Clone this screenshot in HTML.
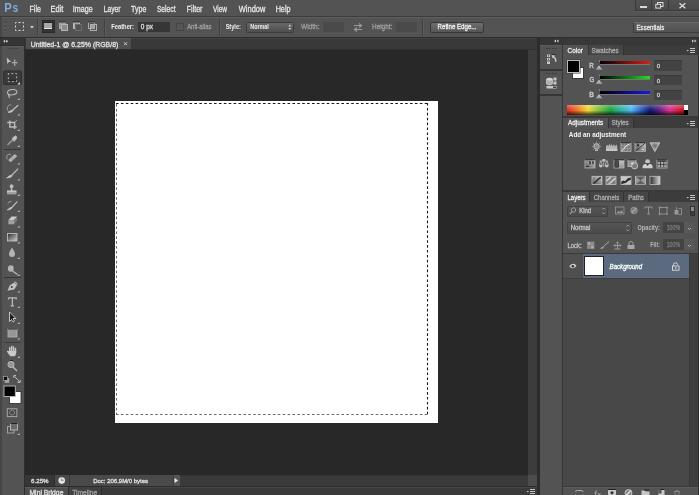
<!DOCTYPE html>
<html><head><meta charset="utf-8">
<style>
*{margin:0;padding:0;box-sizing:border-box}
html,body{width:699px;height:495px;overflow:hidden;background:#535353;font-family:"Liberation Sans",sans-serif;position:relative}
.a{position:absolute}
svg{position:absolute;overflow:visible}
</style></head><body>


<!-- MENU BAR -->
<div class="a" style="left:0;top:0;width:699px;height:16px;background:#535353"></div>
<!-- window controls -->
<div class="a" style="left:634.7px;top:0;width:64.3px;height:10.5px;background:linear-gradient(#525252,#4a4a4a);border-left:1px solid #3c3c3c;border-bottom:1px solid #3a3a3a;box-shadow:0 1px 0 #5c5c5c"></div>
<div class="a" style="left:651.3px;top:0;width:1px;height:10px;background:#3a3a3a"></div>
<div class="a" style="left:668.2px;top:0;width:1px;height:10px;background:#3a3a3a"></div>
<div class="a" style="left:640px;top:6px;width:7px;height:1.5px;background:#d8d8d8"></div>
<svg style="left:0;top:0" width="699" height="16">
<rect x="657.5" y="2.5" width="5.5" height="4" fill="none" stroke="#dcdcdc" stroke-width="1"/>
<rect x="655.8" y="4.3" width="4.8" height="3.8" fill="#4e4e4e" stroke="#dcdcdc" stroke-width="1"/>
<path d="M679.5 3.2L685.3 8.3M685.3 3.2L679.5 8.3" stroke="#dcdcdc" stroke-width="1.3"/>
</svg>
<div class="a" style="left:0;top:16px;width:699px;height:1px;background:#3c3c3c"></div>

<!-- OPTIONS BAR -->
<div class="a" style="left:0;top:17px;width:699px;height:20px;background:#535353;border-top:1px solid #5e5e5e"></div>
<div class="a" style="left:0;top:17px;width:2px;height:20px;background:#464646"></div>
<div class="a" style="left:0;top:37px;width:699px;height:1px;background:#2e2e2e"></div>


<!-- options content -->
<svg style="left:4px;top:20px" width="2" height="15"><g fill="#3c3c3c"><rect x="0.5" y="2" width="1.5" height="1"/><rect x="0.5" y="6" width="1.5" height="1"/><rect x="0.5" y="10" width="1.5" height="1"/></g><g fill="#686868"><rect x="0.5" y="3" width="1.5" height="1"/><rect x="0.5" y="7" width="1.5" height="1"/><rect x="0.5" y="11" width="1.5" height="1"/></g></svg>
<svg style="left:15px;top:22px" width="10" height="10"><rect x="0.5" y="0.5" width="8" height="8" fill="none" stroke="#dcdcdc" stroke-dasharray="2 2" stroke-dashoffset="1"/></svg>
<svg style="left:30px;top:26px" width="5" height="3"><path d="M0 0H4L2 2.5Z" fill="#d0d0d0"/></svg>
<div class="a" style="left:37px;top:19px;width:1px;height:17px;background:#404040"></div>
<div class="a" style="left:38px;top:19px;width:1px;height:17px;background:#5c5c5c"></div>
<div class="a" style="left:42px;top:20px;width:13px;height:13px;background:#333333;border:1px solid #2a2a2a"></div>
<svg style="left:44px;top:22px" width="9" height="8"><rect x="0" y="0" width="8" height="7" fill="#a8a8a8"/><rect x="0" y="0" width="8" height="1" fill="#222"/><rect x="0" y="6" width="8" height="1" fill="#e0e0e0"/></svg>
<svg style="left:58.5px;top:21px" width="10" height="10"><rect x="0.5" y="1.5" width="6" height="6" fill="#9a9a9a" stroke="#a8a8a8"/><rect x="0" y="0.5" width="7" height="1" fill="#2a2a2a"/><rect x="2.5" y="3.5" width="6" height="6" fill="#8a8a8a" stroke="#b4b4b4"/></svg>
<svg style="left:72.5px;top:21px" width="10" height="10"><rect x="0.5" y="1.5" width="6" height="6" fill="#a8a8a8" stroke="#b8b8b8"/><rect x="0" y="0.5" width="7" height="1" fill="#2a2a2a"/><rect x="2.5" y="3.5" width="6" height="6" fill="#535353" stroke="#6e6e6e"/></svg>
<svg style="left:87.5px;top:21px" width="10" height="10"><rect x="0.5" y="1.5" width="6" height="6" fill="none" stroke="#a8a8a8"/><rect x="0" y="0.5" width="7" height="1" fill="#2a2a2a"/><rect x="2.5" y="3.5" width="6" height="6" fill="none" stroke="#b0b0b0"/><rect x="3" y="4" width="3" height="3" fill="#a0a0a0"/></svg>
<div class="a" style="left:104px;top:19px;width:1px;height:17px;background:#404040"></div>
<div class="a" style="left:105px;top:19px;width:1px;height:17px;background:#5c5c5c"></div>
<div class="a" style="left:138px;top:22px;width:32px;height:10px;background:#363636"></div>
<div class="a" style="left:176px;top:23px;width:8px;height:8px;background:#555;border:1px solid #454545"></div>
<div class="a" style="left:219px;top:19px;width:1px;height:17px;background:#404040"></div>
<div class="a" style="left:220px;top:19px;width:1px;height:17px;background:#5c5c5c"></div>
<div class="a" style="left:245.5px;top:21.5px;width:48px;height:11px;background:linear-gradient(#686868,#4e4e4e);border:1px solid #3c3c3c;border-radius:1.5px"></div>
<svg style="left:287.5px;top:24px" width="4" height="7"><path d="M0.3 2.6H3.3L1.8 0.6Z M0.3 4H3.3L1.8 6Z" fill="#d0d0d0"/></svg>
<div class="a" style="left:323px;top:22px;width:21px;height:10px;background:#4a4a4a"></div>
<svg style="left:353px;top:23px" width="10" height="9"><path d="M1 2.5H8M6 0.5L8.5 2.5L6 4.5M9 6.5H2M4 4.5L1.5 6.5L4 8.5" fill="none" stroke="#9a9a9a" stroke-width="1.2"/></svg>
<div class="a" style="left:396px;top:22px;width:21px;height:10px;background:#4a4a4a"></div>
<div class="a" style="left:422px;top:19px;width:1px;height:17px;background:#404040"></div>
<div class="a" style="left:423px;top:19px;width:1px;height:17px;background:#5c5c5c"></div>
<div class="a" style="left:430px;top:22px;width:54px;height:10.5px;background:linear-gradient(#6e6e6e,#565656);border:1px solid #383838;border-radius:2px"></div>
<div class="a" style="left:633px;top:22px;width:66px;height:11px;background:linear-gradient(#5e5e5e,#525252);border:1px solid #3c3c3c;border-top:1px solid #686868;border-right:none"></div>

<!-- LEFT TOOLBAR -->
<div class="a" style="left:0;top:38px;width:25.5px;height:457px;background:#464646"></div>
<div class="a" style="left:0;top:38px;width:24px;height:6.5px;background:#353535"></div>
<div class="a" style="left:0;top:44.5px;width:24px;height:1px;background:#303030"></div>
<div class="a" style="left:1.7px;top:45.5px;width:22.3px;height:450px;background:#535353;border-top:1px solid #5a5a5a"></div>
<div class="a" style="left:24px;top:38px;width:1.5px;height:457px;background:#2e2e2e"></div>

<!-- TOOLBAR ICONS -->
<svg style="left:0;top:0" width="25" height="495">
<defs>
<linearGradient id="gg" x1="0" x2="1" y1="0" y2="1"><stop offset="0" stop-color="#2a2a2a"/><stop offset="1" stop-color="#d0d0d0"/></linearGradient>
<linearGradient id="sv" x1="0" x2="0" y1="0" y2="1"><stop offset="0" stop-color="#d8d8d8"/><stop offset="1" stop-color="#909090"/></linearGradient>
</defs>
<!-- header arrows -->
<path d="M3.8 39.8L5.8 41.3L3.8 42.8Z M6.3 39.8L8.3 41.3L6.3 42.8Z" fill="#e0e0e0"/>
<!-- grip -->
<g fill="#404040"><rect x="7.5" y="48" width="2" height="1"/><rect x="10" y="48" width="2" height="1"/><rect x="13.5" y="48" width="2" height="1"/><rect x="16" y="48" width="2" height="1"/></g>
<!-- move -->
<path d="M6.6 57.6L11.3 61.7L8.9 61.9L7.4 64Z" fill="#bebebe"/>
<path d="M14.7 59.7V65.7M12.2 62.7H17.2" stroke="#b4b4b4" stroke-width="1"/>
<path d="M13.7 60.7L14.7 59.4L15.7 60.7Z M13.7 64.7L14.7 66L15.7 64.7Z M13.2 61.7L11.9 62.7L13.2 63.7Z M16.2 61.7L17.5 62.7L16.2 63.7Z" fill="#b4b4b4"/>
<!-- marquee selected bg -->
<rect x="3.5" y="71" width="18" height="13.5" rx="1" fill="#3a3a3a" stroke="#2e2e2e"/>
<rect x="8.3" y="73.6" width="8.3" height="8" fill="none" stroke="#b0b0b0" stroke-width="1" stroke-dasharray="2 2" stroke-dashoffset="1"/>
<path d="M9.5 80.3H15.5" stroke="#1a1a1a" stroke-width="0.9"/>
<path d="M20 82V84.5H17.2Z" fill="#e0e0e0"/>
<g fill="none" stroke="#bcbcbc" stroke-width="1" stroke-linecap="round">
<!-- lasso -->
<ellipse cx="12.2" cy="92.2" rx="4.7" ry="2.7" transform="rotate(-8 12.2 92.2)"/>
<path d="M8.7 94.6Q8.2 96.2 9.6 97.6" stroke-width="1.1"/>
<!-- quick select -->
<path d="M9.5 112.5Q6.5 110 7.5 107Q8.5 104.5 11 105" stroke-dasharray="1 0.9" stroke-width="0.9" stroke="#a8a8a8"/>
<path d="M17.8 105.5L12.5 110.2" stroke-width="1.4"/>
<path d="M8.8 112.3Q10.3 109.8 13 110.4Q12.6 112.6 8.8 112.3Z" fill="#c8c8c8"/>
<!-- crop -->
<path d="M9.8 120.5V127H16.7M7.2 122.5H14.6V129" stroke-width="1.4" stroke-linecap="butt"/>
<path d="M16.8 120.3L15 122" stroke-width="0.7"/>
<!-- eyedropper -->
<path d="M8 144.5L13.3 139.3" stroke-width="1.5" stroke="#9c9c9c"/>
<path d="M12.3 138.3L15.3 135.8Q17.2 136.3 16.7 138.3L14.3 141.3Z" fill="#c4c4c4" stroke-width="0.8"/>
</g>
<rect x="4" y="149" width="17" height="1" fill="#363636"/>
<g fill="none" stroke="#bcbcbc" stroke-width="1" stroke-linecap="round">
<!-- healing -->
<path d="M7 159Q5.8 155 9 154.2Q10.5 154 10.8 155" stroke-width="0.9" stroke="#a8a8a8"/>
<path d="M8.2 160L14.8 154L17.2 156.2L10.6 162.2Z" fill="#b4b4b4" stroke="none"/>
<path d="M10.8 158.2L13 160.2M12.6 156.6L14.8 158.6" stroke="#8a8a8a" stroke-width="0.6"/>
<!-- brush -->
<path d="M17.8 169L12 175" stroke-width="1.1"/>
<path d="M7 177.8Q8.8 175 12.2 175.2Q12.2 177.6 7 177.8Z" fill="#c4c4c4"/>
<!-- stamp -->
<circle cx="11.6" cy="186.2" r="1.9" fill="#b8b8b8" stroke="none"/>
<path d="M11.6 187V190.5" stroke-width="1.6"/>
<path d="M7 190.5H16.5V194.5H7Z" fill="url(#sv)" stroke="none"/>
<path d="M7 192.8H16.5" stroke="#8a8a8a" stroke-width="0.6"/>
<!-- history brush -->
<path d="M8 203.2Q9 201.2 11 201.4" stroke-width="0.9" stroke="#a8a8a8"/>
<path d="M17 201.8L11.8 207.5" stroke-width="1.2"/>
<path d="M7.8 209.8Q9.3 207.2 12 207.6Q11.6 209.8 7.8 209.8Z" fill="#c4c4c4"/>
<!-- eraser -->
<path d="M8.3 220.2L11.5 216.6H17.2L14 220.2Z" fill="#cacaca" stroke="none"/>
<path d="M8.3 220.2H14V224.3H8.3Z" fill="#a0a0a0" stroke="none"/>
<path d="M14 220.2L17.2 216.6V220.8L14 224.3Z" fill="#7a7a7a" stroke="none"/>
</g>
<!-- gradient -->
<rect x="7.5" y="233.5" width="9.5" height="7.5" fill="url(#gg)" stroke="#bcbcbc" stroke-width="0.9"/>
<!-- blur drop -->
<path d="M12 247.5Q9 252 9 254Q9 257 12 257Q15 257 15 254Q15 252 12 247.5Z" fill="#b4b4b4"/>
<!-- dodge -->
<ellipse cx="10.8" cy="268.5" rx="2.9" ry="3.3" fill="#b4b4b4"/>
<path d="M12.5 271L17.5 274.5" stroke="#bcbcbc" stroke-width="1.3"/>
<rect x="4" y="277" width="17" height="1" fill="#363636"/>
<!-- pen -->
<path d="M7.5 290.8L9.8 285.2L14.3 282.6L17 285.2L14.2 289.6Z" fill="#c0c0c0"/>
<circle cx="11.8" cy="287" r="0.9" fill="#333"/>
<path d="M14.6 281.6L17.6 284.4" stroke="#bcbcbc" stroke-width="1.1"/>
<!-- type T -->
<path d="M8.5 297.8H16.2V299.6M8.5 297.8V299.6M12.35 297.8V305.8M10.6 305.8H14.1" fill="none" stroke="#bcbcbc" stroke-width="1.2"/>
<!-- path select -->
<path d="M9.5 312V321.5L11.5 319.5L13 322L14.5 321L13 318.5H16Z" fill="#1e1e1e" stroke="#cfcfcf" stroke-width="0.9" stroke-linejoin="round"/>
<!-- shape rect -->
<rect x="8" y="329" width="9" height="8" fill="#969696" stroke="#b4b4b4" stroke-width="0.8"/>
<rect x="8" y="328.5" width="9" height="1" fill="#222"/>
<rect x="4" y="342" width="17" height="0.8" fill="#3a3a3a"/>
<!-- hand -->
<g fill="#c8c8c8"><rect x="9" y="347" width="1.5" height="6" rx="0.7"/><rect x="10.9" y="345.8" width="1.5" height="6" rx="0.7"/><rect x="12.8" y="346.3" width="1.5" height="6" rx="0.7"/><rect x="14.7" y="347.8" width="1.5" height="5" rx="0.7"/>
<path d="M9 351H16.2V353.5Q15.6 356.2 14 356.2H10.5Q9.5 355.5 8.5 354L6.8 351.5Q7.2 350.3 8.3 351Z"/></g>
<!-- zoom -->
<circle cx="11" cy="364.5" r="3.1" fill="#969696" stroke="#bcbcbc" stroke-width="0.9"/>
<path d="M13 367L17 371" stroke="#bcbcbc" stroke-width="1.5"/>
<rect x="10" y="360" width="3" height="1" fill="#222"/>
<!-- default colors -->
<rect x="4.8" y="378.2" width="4.4" height="4.6" fill="#a8a8a8"/>
<rect x="3.5" y="376.5" width="3.8" height="3.8" fill="#111" stroke="#b0b0b0" stroke-width="0.6"/>
<!-- swap -->
<path d="M14.6 376.6L17.2 379.2Q18.8 380.2 19.2 382" fill="none" stroke="#c4c4c4" stroke-width="1"/>
<path d="M13.8 375.6H16M13.8 375.6V377.8M17.6 382.4H20.2M20.2 380V382.4" fill="none" stroke="#c4c4c4" stroke-width="1"/>
<!-- bg color -->
<rect x="9.5" y="391.5" width="11.5" height="12" fill="#ffffff" stroke="#2a2a2a" stroke-width="0.8"/>
<!-- fg color -->
<rect x="4" y="386" width="11.3" height="10.5" fill="#000" stroke="#bcbcbc" stroke-width="0.9"/>
<!-- quick mask -->
<rect x="7.3" y="408.8" width="9.6" height="7.8" fill="#4a4a4a" stroke="#a8a8a8" stroke-width="1"/>
<circle cx="12.1" cy="412.6" r="2.4" fill="none" stroke="#b0b0b0" stroke-width="0.9" stroke-dasharray="1.2 0.6"/>
<!-- screen mode -->
<rect x="7.5" y="426.5" width="6.5" height="6.5" fill="none" stroke="#a0a0a0" stroke-width="1"/>
<rect x="10.5" y="423.5" width="7" height="6.5" fill="#6a6a6a" stroke="#b0b0b0" stroke-width="1"/>
<rect x="10.5" y="423" width="7" height="1" fill="#222"/>
<!-- small triangles -->
<g fill="#d4d4d4">
<path d="M19.5 98V100H17.5Z"/>
<path d="M19.5 113.5V115.5H17.5Z"/>
<path d="M19.5 129V131H17.5Z"/>
<path d="M19.5 145V147H17.5Z"/>
<path d="M19.5 162.5V164.5H17.5Z"/>
<path d="M19.5 178.5V180.5H17.5Z"/>
<path d="M19.5 194V196H17.5Z"/>
<path d="M19.5 210V212H17.5Z"/>
<path d="M19.5 225.5V227.5H17.5Z"/>
<path d="M19.5 241.5V243.5H17.5Z"/>
<path d="M19.5 257V259H17.5Z"/>
<path d="M19.5 274V276H17.5Z"/>
<path d="M19.5 290.5V292.5H17.5Z"/>
<path d="M19.5 306V308H17.5Z"/>
<path d="M19.5 322V324H17.5Z"/>
<path d="M19.5 337.5V339.5H17.5Z"/>
<path d="M19.5 356V358H17.5Z"/>
<path d="M19.5 433V435H17.5Z"/>
</g>
</svg>

<!-- DOCUMENT AREA -->
<div class="a" style="left:25px;top:38px;width:512px;height:12px;background:#393939;border-top:1px solid #404040"></div>
<div class="a" style="left:25.5px;top:38px;width:105.5px;height:11px;background:#4f4f4f;border-top:1px solid #5a5a5a"></div>
<div class="a" style="left:25px;top:49px;width:512px;height:1px;background:#2e2e2e"></div>
<svg style="left:123px;top:41px" width="6" height="6"><path d="M1 1.2L4 4.2M4 1.2L1 4.2" stroke="#d8d8d8" stroke-width="0.9"/></svg>
<div class="a" style="left:25px;top:50px;width:503px;height:425px;background:#282828"></div>
<div class="a" style="left:528px;top:50px;width:9px;height:425px;background:#3c3c3c"></div>
<!-- canvas -->
<div class="a" style="left:115px;top:101px;width:323px;height:322px;background:#ffffff"></div>
<svg style="left:0;top:0" width="699" height="495">
<path d="M116 103.5H428" stroke="#1a1a1a" stroke-width="1.1" stroke-dasharray="2.6 2.3"/>
<path d="M427.5 103V415" stroke="#1a1a1a" stroke-width="1.1" stroke-dasharray="2.6 2.3"/>
<path d="M116.5 104V415" stroke="#6a6a6a" stroke-width="1" stroke-dasharray="2.6 2.3"/>
<path d="M116 414.5H428" stroke="#6a6a6a" stroke-width="1" stroke-dasharray="2.6 2.3"/>
</svg>
<!-- status bar -->
<div class="a" style="left:25px;top:475px;width:512px;height:10.5px;background:#3a3a3a;border-top:1px solid #333"></div>
<div class="a" style="left:25px;top:475px;width:29px;height:10.5px;background:#363636"></div>
<div class="a" style="left:54px;top:475px;width:14.5px;height:10.5px;background:#4a4a4a;border-left:1px solid #2e2e2e"></div>
<div class="a" style="left:68.5px;top:475px;width:104px;height:10.5px;background:#4a4a4a;border-left:1px solid #3a3a3a"></div>
<div class="a" style="left:172.5px;top:475px;width:7px;height:10.5px;background:#555555;border-left:1px solid #3a3a3a"></div>
<svg style="left:0;top:0" width="699" height="495">
<circle cx="61.7" cy="480.6" r="3.3" fill="#e4e4e4"/>
<path d="M61 480.3H63.8M61 480.3Q61 478.8 62.4 478.9" fill="none" stroke="#6a6a6a" stroke-width="0.7"/>
<path d="M174.5 478L178 480.5L174.5 483Z" fill="#f0f0f0"/>
</svg>
<div class="a" style="left:528px;top:475px;width:9px;height:10.5px;background:#4c4c4c"></div>
<div class="a" style="left:25px;top:485.5px;width:512px;height:1.5px;background:#2c2c2c"></div>
<div class="a" style="left:25px;top:487px;width:512px;height:8px;background:#3a3a3a;border-top:1px solid #454545"></div>
<div class="a" style="left:25px;top:487px;width:43px;height:8px;background:#4e4e4e;border-top:1px solid #5c5c5c"></div>
<div class="a" style="left:68px;top:487px;width:33.5px;height:8px;background:#404040;border-left:1px solid #2e2e2e;border-right:1px solid #2e2e2e"></div>

<!-- SEPARATOR & DOCK -->
<div class="a" style="left:537px;top:38px;width:2.5px;height:457px;background:#2c2c2c"></div>
<div class="a" style="left:539.5px;top:38px;width:23.5px;height:7px;background:#363636"></div>
<div class="a" style="left:539.5px;top:45px;width:22.5px;height:450px;background:#535353;border-top:1px solid #5c5c5c"></div>
<div class="a" style="left:539.5px;top:69px;width:22.5px;height:1.5px;background:#363636"></div>
<div class="a" style="left:539.5px;top:94px;width:22.5px;height:1.5px;background:#363636"></div>
<div class="a" style="left:562px;top:38px;width:1.5px;height:457px;background:#363636"></div>

<!-- RIGHT PANELS -->
<div class="a" style="left:563px;top:38px;width:136px;height:7px;background:#383838"></div>
<div class="a" style="left:563px;top:45px;width:135px;height:450px;background:#535353"></div>
<div class="a" style="left:698px;top:38px;width:1px;height:457px;background:#2e2e2e"></div>
<!-- color tabs -->
<div class="a" style="left:563px;top:45px;width:135px;height:10px;background:#3c3c3c"></div>
<div class="a" style="left:563px;top:45px;width:25px;height:10px;background:#535353"></div>
<div class="a" style="left:588px;top:45px;width:35px;height:10px;background:#464646"></div>

<!-- adjustments -->
<div class="a" style="left:563px;top:116px;width:135px;height:2px;background:#3a3a3a"></div>
<div class="a" style="left:563px;top:118px;width:135px;height:10px;background:#3c3c3c"></div>
<div class="a" style="left:563px;top:118px;width:45px;height:10px;background:#535353"></div>
<div class="a" style="left:608px;top:118px;width:25px;height:10px;background:#464646"></div>

<!-- layers -->
<div class="a" style="left:563px;top:190px;width:135px;height:2px;background:#3a3a3a"></div>
<div class="a" style="left:563px;top:192px;width:135px;height:10px;background:#3c3c3c"></div>
<div class="a" style="left:563px;top:192px;width:26px;height:10px;background:#535353"></div>
<div class="a" style="left:589px;top:192px;width:34px;height:10px;background:#464646"></div>
<div class="a" style="left:623px;top:192px;width:26px;height:10px;background:#464646"></div>

<div class="a" style="left:563px;top:253px;width:135px;height:1px;background:#3a3a3a"></div>
<div class="a" style="left:563px;top:254px;width:126px;height:232px;background:#484848"></div>
<div class="a" style="left:689px;top:254px;width:9px;height:232px;background:#3f3f3f;border-left:1px solid #383838"></div>
<div class="a" style="left:583px;top:254px;width:106px;height:24px;background:#5b6a7e"></div>
<div class="a" style="left:563px;top:254px;width:20px;height:24px;background:#4f4f4f"></div>
<div class="a" style="left:584px;top:256px;width:20px;height:20px;background:#fff;border:1px solid #222"></div>
<div class="a" style="left:563px;top:278px;width:126px;height:1px;background:#3e3e3e"></div>
<div class="a" style="left:563px;top:486px;width:135px;height:1px;background:#3a3a3a"></div>
<div class="a" style="left:563px;top:487px;width:135px;height:8px;background:#535353;border-top:1px solid #5c5c5c"></div>
<!-- COLOR PANEL CONTENT -->
<div class="a" style="left:572px;top:67px;width:12px;height:12px;background:#fff;border:1px solid #3a3a3a"></div>
<div class="a" style="left:567px;top:60px;width:12.5px;height:12.5px;background:#000;border:1px solid #b8b8b8;box-shadow:0 0 0 0.5px #3a3a3a"></div>
<div class="a" style="left:600px;top:61px;width:50px;height:3px;background:linear-gradient(90deg,#000,#e41a1a)"></div>
<div class="a" style="left:600px;top:64px;width:50px;height:1px;background:#767676"></div>
<div class="a" style="left:600px;top:75.5px;width:50px;height:3px;background:linear-gradient(90deg,#000,#20e020)"></div>
<div class="a" style="left:600px;top:78.5px;width:50px;height:1px;background:#767676"></div>
<div class="a" style="left:600px;top:90.5px;width:50px;height:3px;background:linear-gradient(90deg,#000,#1818e8)"></div>
<div class="a" style="left:600px;top:93.5px;width:50px;height:1px;background:#767676"></div>
<svg style="left:0;top:0" width="699" height="495">
<defs><linearGradient id="tri" x1="0" x2="0" y1="0" y2="1"><stop offset="0" stop-color="#e0e0e0"/><stop offset="1" stop-color="#8a8a8a"/></linearGradient></defs>
<path d="M595.5 69.8L599 65.5L602.5 69.8Z" fill="url(#tri)"/>
<path d="M595.5 84L599 79.7L602.5 84Z" fill="url(#tri)"/>
<path d="M595.5 98.6L599 94.3L602.5 98.6Z" fill="url(#tri)"/>
<path d="M599.5 60V62" stroke="#8a8a8a" stroke-width="0.8"/>
<path d="M599.5 74.5V76.5" stroke="#8a8a8a" stroke-width="0.8"/>
<path d="M599.5 89V91" stroke="#8a8a8a" stroke-width="0.8"/>
</svg>
<div class="a" style="left:654px;top:60px;width:28px;height:11px;background:#434343;border-top:1px solid #3a3a3a"></div>
<div class="a" style="left:654px;top:75px;width:28px;height:10px;background:#434343;border-top:1px solid #3a3a3a"></div>
<div class="a" style="left:654px;top:89.5px;width:28px;height:10px;background:#434343;border-top:1px solid #3a3a3a"></div>
<div class="a" style="left:566.5px;top:105px;width:117px;height:10px;background:linear-gradient(180deg,rgba(255,255,255,0.3),rgba(255,255,255,0.05) 40%,rgba(0,0,0,0) 55%,rgba(0,0,0,0.75)),linear-gradient(90deg,#e02828 0%,#f07828 9%,#f0d838 18%,#80c040 27%,#20a040 37%,#30b0a0 46%,#50b8f0 55%,#3060c0 63%,#101870 71%,#602080 79%,#e03090 88%,#d02040 95%,#c01020 100%)"></div>
<div class="a" style="left:683.5px;top:105px;width:4px;height:5px;background:#fff"></div>
<div class="a" style="left:683.5px;top:110px;width:4px;height:5px;background:#000"></div>

<!-- panel menu icons -->
<svg style="left:0;top:0" width="699" height="495">
<g fill="#c4c4c4">
<rect x="690" y="48" width="5" height="1"/><rect x="690" y="50" width="5" height="1"/><rect x="690" y="52" width="5" height="1"/>
<path d="M686.5 50H689L687.7 51.5Z"/>
<rect x="690" y="121" width="5" height="1"/><rect x="690" y="123" width="5" height="1"/><rect x="690" y="125" width="5" height="1"/>
<path d="M686.5 123H689L687.7 124.5Z"/>
<rect x="690" y="195" width="5" height="1"/><rect x="690" y="197" width="5" height="1"/><rect x="690" y="199" width="5" height="1"/>
<path d="M686.5 197H689L687.7 198.5Z"/>
<rect x="530" y="489" width="5" height="1"/><rect x="530" y="491" width="5" height="1"/><rect x="530" y="493" width="5" height="1"/>
<path d="M526.5 491H529L527.7 492.5Z"/>
</g>
<!-- header arrows -->
<path d="M556 39.5L554 41L556 42.5Z M558.5 39.5L556.5 41L558.5 42.5Z" fill="#d0d0d0"/>
<path d="M692 39.5L694 41L692 42.5Z M694.5 39.5L696.5 41L694.5 42.5Z" fill="#d0d0d0"/>
</svg>

<!-- ADJUSTMENT ICONS -->
<svg style="left:0;top:0" width="699" height="495">
<defs>
<linearGradient id="ag" x1="0" x2="1" y1="0" y2="0"><stop offset="0" stop-color="#2a2a2a"/><stop offset="1" stop-color="#d8d8d8"/></linearGradient>
<linearGradient id="ag2" x1="0" x2="1" y1="1" y2="0"><stop offset="0" stop-color="#505050"/><stop offset="1" stop-color="#d0d0d0"/></linearGradient>
<linearGradient id="ag3" x1="0" x2="0" y1="0" y2="1"><stop offset="0" stop-color="#c8c8c8"/><stop offset="1" stop-color="#909090"/></linearGradient>
<radialGradient id="vib" cx="0.5" cy="0.35" r="0.6"><stop offset="0" stop-color="#6a6a6a"/><stop offset="1" stop-color="#c4c4c4"/></radialGradient>
</defs>
<g stroke="#c0c0c0" fill="none" stroke-width="0.9">
<!-- row1: brightness bulb -->
<path d="M595 150.5H598M595.2 149.2Q593.8 147.8 593.8 146.3Q593.8 143.6 596.5 143.6Q599.2 143.6 599.2 146.3Q599.2 147.8 597.8 149.2Z" fill="#8a8a8a" stroke="#d0d0d0" stroke-width="0.8"/>
<path d="M596.5 141.5V142.5M591.8 146.3H592.8M600.2 146.3H601.2M593.2 143L593.9 143.7M599.8 143L599.1 143.7M593.2 149.6L593.9 148.9M599.8 149.6L599.1 148.9" stroke-width="0.7" stroke="#c8c8c8"/>
<!-- levels -->
<path d="M606 150.8V146.5L607.3 144.8L608.3 146.3L609.4 143.8L610.5 146L611.6 144L612.8 146.3L614 144.2L615.2 146.3L616.3 144.6L617.3 146.3V150.8Z" fill="#b4b4b4" stroke="none"/>
<rect x="606" y="149.3" width="11.3" height="1.5" fill="#d0d0d0" stroke="none"/>
<!-- curves -->
<rect x="621" y="143" width="10" height="8.3" fill="#767676" stroke="#bcbcbc" stroke-width="0.8"/>
<path d="M621 145.8H631M621 148.5H631M624.3 143V151.3M627.6 143V151.3" stroke="#a8a8a8" stroke-width="0.6"/>
<path d="M621.5 151Q623 150 624.5 148Q626 145.5 627.5 145Q629.5 144 630.8 143.2" stroke="#f0f0f0" stroke-width="1"/>
<rect x="621" y="142.3" width="10" height="1" fill="#1e1e1e" stroke="none"/>
<!-- exposure -->
<rect x="635" y="143" width="10.5" height="8.3" fill="url(#ag2)" stroke="#bcbcbc" stroke-width="0.8"/>
<path d="M635.5 151L645 143.3" stroke="#303030" stroke-width="0.9"/>
<path d="M636.6 145.2H639.4M638 143.8V146.6" stroke="#1a1a1a" stroke-width="0.9"/>
<path d="M641.5 149.5H644" stroke="#e8e8e8" stroke-width="0.8"/>
<rect x="635" y="142.3" width="10.5" height="1" fill="#1e1e1e" stroke="none"/>
<!-- vibrance -->
<path d="M650 142.8H659.8L654.9 151.6Z" fill="url(#vib)" stroke="#c4c4c4" stroke-width="0.8"/>
<!-- row2: hue/sat -->
<rect x="585" y="160" width="10" height="8" fill="url(#ag2)" stroke="#b8b8b8" stroke-width="0.8"/>
<rect x="589.3" y="161" width="1.4" height="3.2" fill="#2a2a2a" stroke="none"/><rect x="592.3" y="161" width="1.4" height="3.2" fill="#2a2a2a" stroke="none"/>
<path d="M586 166.5H589" stroke="#222" stroke-width="0.8"/>
<rect x="585" y="159.3" width="10" height="1" fill="#1e1e1e" stroke="none"/>
<!-- color balance -->
<path d="M603.8 159V167M599.5 161H608M600.8 161L599.3 164.8M600.8 161L602.3 164.8M606.8 161L605.3 164.8M606.8 161L608.3 164.8" stroke-width="0.8" stroke="#bcbcbc"/>
<path d="M598.8 164.8H602.8Q602.5 167.6 600.8 167.6Q599.1 167.6 598.8 164.8Z M604.8 164.8H608.8Q608.5 167.6 606.8 167.6Q605.1 167.6 604.8 164.8Z" fill="#c4c4c4" stroke="none"/>
<rect x="602.3" y="159.2" width="3" height="1.6" fill="#d0d0d0" stroke="none"/>
<!-- B&W -->
<rect x="614" y="160" width="10" height="8" fill="url(#ag3)" stroke="#bcbcbc" stroke-width="0.8"/>
<rect x="614.8" y="160.8" width="3.8" height="6.4" fill="#4a4a4a" stroke="#1e1e1e" stroke-width="0.6"/>
<rect x="614" y="159.3" width="10" height="1" fill="#1e1e1e" stroke="none"/>
<!-- photo filter -->
<rect x="628" y="160" width="8" height="6.5" fill="#8e8e8e" stroke="#c0c0c0" stroke-width="0.8"/>
<rect x="628" y="159.3" width="8" height="1" fill="#1e1e1e" stroke="none"/>
<circle cx="634.6" cy="165.8" r="3.1" fill="#7a7a7a" stroke="#c8c8c8" stroke-width="0.9"/>
<circle cx="632.3" cy="163.6" r="1.4" fill="#d0d0d0" stroke="none"/>
<!-- channel mixer -->
<circle cx="647.6" cy="161.6" r="2.4" fill="#c4c4c4" stroke="none"/>
<path d="M642.5 168.2Q642.5 164 645.3 164H650Q652.7 164 652.7 168.2Z" fill="#cfcfcf" stroke="none"/>
<path d="M645.6 163.2L647.6 166L649.6 163.2Z" fill="#3a3a3a" stroke="none"/>
<!-- color lookup -->
<rect x="657" y="160" width="10" height="8" fill="#333" stroke="#c0c0c0" stroke-width="0.8"/>
<g fill="#a8a8a8" stroke="none"><rect x="657.8" y="161.8" width="2.4" height="2.5"/><rect x="661" y="161.8" width="2.4" height="2.5"/><rect x="664.2" y="161.8" width="2.2" height="2.5"/><rect x="657.8" y="165" width="2.4" height="2.3"/><rect x="661" y="165" width="2.4" height="2.3"/><rect x="664.2" y="165" width="2.2" height="2.3"/></g>
<rect x="657" y="159.3" width="10" height="1" fill="#1e1e1e" stroke="none"/>
<!-- row3: invert -->
<rect x="592" y="176.3" width="10" height="8.2" fill="url(#ag2)" stroke="#c0c0c0" stroke-width="0.8"/>
<path d="M593.5 183.5Q596 181.5 597 180.5Q598 179.2 600.8 177.3" stroke="#2e2e2e" stroke-width="1.5"/>
<!-- posterize -->
<rect x="606" y="176.3" width="10" height="8.2" fill="#7e7e7e" stroke="#c0c0c0" stroke-width="0.8"/>
<path d="M606.5 181L611 176.8M608.8 184.2L615.5 178.2" stroke="#cacaca" stroke-width="1.7"/>
<!-- threshold -->
<rect x="621" y="176.3" width="10" height="8.2" fill="#c8c8c8" stroke="#c0c0c0" stroke-width="0.8"/>
<path d="M621.3 181.5L623.5 180.5L625 181.2L627.5 178.6L630.7 177.3V180L628 181L626.5 182.6L624.5 183.2L621.3 184.2Z" fill="#2c2c2c" stroke="none"/>
<!-- selective color -->
<rect x="635.5" y="176.3" width="10" height="8.2" fill="#9a9a9a" stroke="#c0c0c0" stroke-width="0.8"/>
<path d="M635.8 176.6L640.5 180.4L645.2 176.6Z M635.8 184.2L640.5 180.4L645.2 184.2Z" fill="#5e5e5e" stroke="none"/>
<!-- gradient map -->
<rect x="650" y="176.3" width="10" height="8.2" fill="url(#ag)" stroke="#c0c0c0" stroke-width="0.8"/>
</g>
</svg>

<!-- LAYERS CONTROLS -->
<div class="a" style="left:566.5px;top:205.5px;width:41.5px;height:11px;background:linear-gradient(#545454,#4b4b4b);border:1px solid #424242;border-radius:1px"></div>
<div class="a" style="left:566.5px;top:222px;width:65.5px;height:11.5px;background:linear-gradient(#545454,#4b4b4b);border:1px solid #424242;border-radius:1px"></div>
<div class="a" style="left:663px;top:222px;width:21px;height:11px;background:#434343"></div>
<div class="a" style="left:684px;top:222px;width:11px;height:11px;background:#585858"></div>
<div class="a" style="left:663px;top:239px;width:21px;height:11px;background:#434343"></div>
<div class="a" style="left:684px;top:239px;width:11px;height:11px;background:#585858"></div>
<div class="a" style="left:690px;top:206px;width:5px;height:10px;background:linear-gradient(#8a8a8a 0,#8a8a8a 45%,#3a3a3a 50%,#3a3a3a 100%);border:1px solid #333"></div>
<svg style="left:0;top:0" width="699" height="495">
<g fill="none" stroke="#a8a8a8" stroke-width="0.8">
<!-- magnifier -->
<circle cx="573.5" cy="210" r="2.2"/>
<path d="M571.8 211.8L570 213.8" stroke-width="1.1"/>
<!-- dropdown arrows -->
<path d="M602.5 209.5L603.8 208L605 209.5M602.5 212.5L603.8 214L605 212.5" stroke-width="0.8"/>
<path d="M626.5 226.5L627.8 225L629 226.5M626.5 229.5L627.8 231L629 229.5" stroke-width="0.8"/>
<path d="M688 228L689.5 229.5L691 228" stroke="#c8c8c8" stroke-width="0.8"/>
<path d="M688 245L689.5 246.5L691 245" stroke="#c8c8c8" stroke-width="0.8"/>
<!-- filter icons -->
<rect x="615.5" y="207" width="8.5" height="7" stroke="#989898"/>
<path d="M616.5 213L618.5 211L620 212L622 210L623 213Z" fill="#989898" stroke="none"/>
<circle cx="634" cy="210.5" r="3.3" fill="#7a7a7a" stroke="#989898"/>
<path d="M631.7 212.8L636.3 208.2" stroke="#b0b0b0" stroke-width="1.2"/>
<path d="M645 207H652M648.5 207V214M647 214H650M645 207V208.5M652 207V208.5" stroke="#989898" stroke-width="0.9"/>
<rect x="659.5" y="207.5" width="7.5" height="6.5" stroke="#989898"/>
<rect x="658.7" y="206.7" width="1.6" height="1.6" fill="#989898" stroke="none"/><rect x="666.2" y="206.7" width="1.6" height="1.6" fill="#989898" stroke="none"/><rect x="658.7" y="213.2" width="1.6" height="1.6" fill="#989898" stroke="none"/><rect x="666.2" y="213.2" width="1.6" height="1.6" fill="#989898" stroke="none"/>
<rect x="674.5" y="210" width="4" height="4.5" fill="#989898" stroke="none"/>
<path d="M676.5 210V207M678.5 208.5H681.5V214.5H678.5" stroke="#989898"/>
<!-- lock icons -->
<rect x="587" y="241.5" width="7.5" height="7.5" fill="#7a7a7a" stroke="none"/>
<rect x="587.5" y="242" width="3" height="3" fill="#a8a8a8" stroke="none"/><rect x="591" y="245.5" width="3" height="3" fill="#a8a8a8" stroke="none"/>
<rect x="591" y="242" width="3" height="3" fill="#8e8e8e" stroke="none"/><rect x="587.5" y="245.5" width="3" height="3" fill="#8e8e8e" stroke="none"/>
<path d="M609 241.5L603.5 246.5" stroke="#a8a8a8" stroke-width="1"/>
<path d="M600 249Q601.5 246 604 246.5Q604 249 600 249Z" fill="#a8a8a8" stroke="none"/>
<path d="M617.5 242V249M614 245.5H621M616.3 243.2L617.5 241.8L618.7 243.2M615.2 244.3L614 245.5L615.2 246.7M619.8 244.3L621 245.5L619.8 246.7M614.5 249H620.5" stroke="#a8a8a8" stroke-width="0.8"/>
<path d="M629 245V243.5Q629 241.5 631 241.5Q633 241.5 633 243.5V245" stroke="#a8a8a8" stroke-width="0.9"/>
<rect x="627.5" y="245" width="7" height="4" fill="#a8a8a8" stroke="none"/>
</g>
<!-- eye -->
<path d="M569.3 266Q572 263.3 574.5 264Q576 264.8 576.5 266Q574 268.8 571.5 268Q570 267.5 569.3 266Z" fill="#d0d0d0"/>
<ellipse cx="572.9" cy="266.2" rx="1.4" ry="1.3" fill="#3a3a3a"/>
<!-- layer lock -->
<path d="M673.5 266V264.5Q673.5 262.8 675.5 262.8Q677.5 262.8 677.5 264.5V265" fill="none" stroke="#e0e0e0" stroke-width="0.9"/>
<rect x="672.5" y="266" width="6.5" height="4.2" fill="none" stroke="#e0e0e0" stroke-width="0.9"/>
<rect x="675.2" y="267.3" width="1.2" height="1.6" fill="#e0e0e0"/>
<!-- footer icons -->
<g fill="none" stroke="#b0b0b0" stroke-width="1">
<path d="M575.5 492Q575.5 490.5 577.5 490.5H581Q583 490.5 583 492M575.5 494.5Q575.5 496 577.5 496H581Q583 496 583 494.5"/>
<path d="M597 490.5Q595.5 490.5 595.5 492.5V496M594.5 493H597M598 493L600.5 496M600.5 493L598 496" stroke-width="0.8"/>
</g>
<rect x="608" y="489.5" width="8" height="6" fill="#c8c8c8"/>
<circle cx="612" cy="492.8" r="1.6" fill="#333"/>
<rect x="608" y="489" width="8" height="1" fill="#222"/>
<circle cx="628.5" cy="493" r="3.5" fill="#8a8a8a" stroke="#c8c8c8" stroke-width="0.9"/>
<path d="M626 495.5L631 490.5" stroke="#e0e0e0" stroke-width="1.3"/>
<path d="M641.5 490.5H645L646 491.5H649.5V496H641.5Z" fill="#c8c8c8"/>
<rect x="644" y="489.5" width="5" height="1" fill="#222"/>
<path d="M658.5 490H664.5V496H658.5Z" fill="#c8c8c8"/>
<path d="M658.5 490H661.5V493.5H658.5Z" fill="#535353"/>
<rect x="661" y="489" width="3.5" height="1" fill="#222"/>
<path d="M674 491.5H680M675 492V496H679V492M676.2 490.5H677.8" fill="none" stroke="#8a8a8a" stroke-width="0.9"/>
</svg>

<!-- DOCK ICONS -->
<svg style="left:0;top:0" width="699" height="495">
<g fill="#3e3e3e"><rect x="546" y="48" width="2" height="1"/><rect x="548.5" y="48" width="2" height="1"/><rect x="552" y="48" width="2" height="1"/><rect x="554.5" y="48" width="2" height="1"/>
<rect x="546" y="73" width="2" height="1"/><rect x="548.5" y="73" width="2" height="1"/><rect x="552" y="73" width="2" height="1"/><rect x="554.5" y="73" width="2" height="1"/></g>
<g fill="#c8c8c8">
<rect x="547" y="54.5" width="3" height="2.5"/><rect x="547" y="58" width="3" height="2.5"/><rect x="547" y="61.5" width="3" height="2.5"/>
<rect x="548" y="55.2" width="1" height="1.2" fill="#444"/><rect x="548" y="58.7" width="1" height="1.2" fill="#444"/>
</g>
<path d="M553 56.8Q556.3 58 555.6 61.8" fill="none" stroke="#c4c4c4" stroke-width="1.5"/>
<path d="M551.6 55L555.2 55.6L552.6 58.6Z" fill="#c8c8c8"/>
<rect x="552" y="54.2" width="3.5" height="0.8" fill="#222"/>
<g transform="translate(0,-1.5)"><!-- properties icon -->
<path d="M546.5 80.5Q549.5 78.5 552.5 80.5V85.5Q549.5 87.5 546.5 85.5Z" fill="#b0b0b0" stroke="#d0d0d0" stroke-width="0.7"/>
<ellipse cx="549.5" cy="80.8" rx="3" ry="1.2" fill="#d8d8d8"/>
<rect x="553.5" y="79" width="3" height="3" fill="#c8c8c8"/><rect x="553.5" y="83" width="3" height="3" fill="#c8c8c8"/>
<rect x="546.5" y="87.5" width="10" height="2.5" fill="#c8c8c8"/>
<rect x="553" y="88" width="3" height="1.5" fill="#444"/>
</g></svg>
<!-- tab separators -->
<div class="a" style="left:588px;top:45px;width:1px;height:10px;background:#333"></div>
<div class="a" style="left:622.5px;top:45px;width:1px;height:10px;background:#333"></div>
<div class="a" style="left:607.5px;top:118px;width:1px;height:10px;background:#333"></div>
<div class="a" style="left:632.5px;top:118px;width:1px;height:10px;background:#333"></div>
<div class="a" style="left:589px;top:192px;width:1px;height:10px;background:#333"></div>
<div class="a" style="left:623px;top:192px;width:1px;height:10px;background:#333"></div>
<div class="a" style="left:648px;top:192px;width:1px;height:10px;background:#333"></div>

<svg class="txt" style="position:absolute;left:0;top:0;will-change:transform" width="699" height="495" font-family="Liberation Sans, sans-serif">
<text x="4.18" y="11.90" font-size="12.5" fill="#80acd9" font-weight="bold" textLength="7.53" lengthAdjust="spacingAndGlyphs">P</text>
<text x="12.47" y="11.90" font-size="12.5" fill="#80acd9" font-weight="bold" textLength="5.70" lengthAdjust="spacingAndGlyphs">s</text>
<text x="29.55" y="11.70" font-size="9" fill="#e8e8e8" stroke="#e8e8e8" stroke-width="0.28" textLength="11.39" lengthAdjust="spacingAndGlyphs">File</text>
<text x="50.62" y="11.70" font-size="9" fill="#e8e8e8" stroke="#e8e8e8" stroke-width="0.28" textLength="12.78" lengthAdjust="spacingAndGlyphs">Edit</text>
<text x="72.76" y="11.70" font-size="9" fill="#e8e8e8" stroke="#e8e8e8" stroke-width="0.28" textLength="19.88" lengthAdjust="spacingAndGlyphs">Image</text>
<text x="103.78" y="11.70" font-size="9" fill="#e8e8e8" stroke="#e8e8e8" stroke-width="0.28" textLength="16.69" lengthAdjust="spacingAndGlyphs">Layer</text>
<text x="131.04" y="11.70" font-size="9" fill="#e8e8e8" stroke="#e8e8e8" stroke-width="0.28" textLength="15.40" lengthAdjust="spacingAndGlyphs">Type</text>
<text x="156.90" y="11.70" font-size="9" fill="#e8e8e8" stroke="#e8e8e8" stroke-width="0.28" textLength="18.60" lengthAdjust="spacingAndGlyphs">Select</text>
<text x="186.75" y="11.70" font-size="9" fill="#e8e8e8" stroke="#e8e8e8" stroke-width="0.28" textLength="15.73" lengthAdjust="spacingAndGlyphs">Filter</text>
<text x="213.00" y="11.70" font-size="9" fill="#e8e8e8" stroke="#e8e8e8" stroke-width="0.28" textLength="14.03" lengthAdjust="spacingAndGlyphs">View</text>
<text x="238.80" y="11.70" font-size="9" fill="#e8e8e8" stroke="#e8e8e8" stroke-width="0.28" textLength="26.52" lengthAdjust="spacingAndGlyphs">Window</text>
<text x="275.64" y="11.70" font-size="9" fill="#e8e8e8" stroke="#e8e8e8" stroke-width="0.28" textLength="14.91" lengthAdjust="spacingAndGlyphs">Help</text>
<text x="111.27" y="29.10" font-size="7" fill="#f0f0f0" font-weight="bold" textLength="22.75" lengthAdjust="spacingAndGlyphs">Feather:</text>
<text x="140.82" y="29.30" font-size="7" fill="#e0e0e0" stroke="#e0e0e0" stroke-width="0.28" textLength="12.18" lengthAdjust="spacingAndGlyphs">0 px</text>
<text x="187.20" y="29.10" font-size="7" fill="#a0a0a0" stroke="#a0a0a0" stroke-width="0.28" textLength="24.17" lengthAdjust="spacingAndGlyphs">Anti-alias</text>
<text x="225.64" y="29.10" font-size="7" fill="#f0f0f0" font-weight="bold" textLength="15.27" lengthAdjust="spacingAndGlyphs">Style:</text>
<text x="250.29" y="29.00" font-size="7" fill="#f0f0f0" font-weight="bold" textLength="18.55" lengthAdjust="spacingAndGlyphs">Normal</text>
<text x="301.00" y="29.10" font-size="7" fill="#a0a0a0" stroke="#a0a0a0" stroke-width="0.28" textLength="18.51" lengthAdjust="spacingAndGlyphs">Width:</text>
<text x="372.04" y="29.10" font-size="7" fill="#a0a0a0" stroke="#a0a0a0" stroke-width="0.28" textLength="20.25" lengthAdjust="spacingAndGlyphs">Height:</text>
<text x="437.56" y="29.30" font-size="7" fill="#f0f0f0" stroke="#f0f0f0" stroke-width="0.28" textLength="38.92" lengthAdjust="spacingAndGlyphs">Refine Edge...</text>
<text x="636.57" y="30.00" font-size="7" fill="#e6e6e6" stroke="#e6e6e6" stroke-width="0.28" textLength="27.61" lengthAdjust="spacingAndGlyphs">Essentials</text>
<text x="30.64" y="47.10" font-size="7.5" fill="#e4e4e4" stroke="#e4e4e4" stroke-width="0.28" textLength="87.73" lengthAdjust="spacingAndGlyphs">Untitled-1 @ 6.25% (RGB/8)</text>
<text x="31.09" y="483.20" font-size="6" fill="#e0e0e0" stroke="#e0e0e0" stroke-width="0.28" textLength="17.55" lengthAdjust="spacingAndGlyphs">6.25%</text>
<text x="93.20" y="483.20" font-size="6" fill="#e0e0e0" stroke="#e0e0e0" stroke-width="0.28" textLength="54.90" lengthAdjust="spacingAndGlyphs">Doc: 206.9M/0 bytes</text>
<text x="29.48" y="494.60" font-size="6.5" fill="#e0e0e0" stroke="#e0e0e0" stroke-width="0.28" textLength="33.95" lengthAdjust="spacingAndGlyphs">Mini Bridge</text>
<text x="72.20" y="494.60" font-size="6.5" fill="#a0a0a0" stroke="#a0a0a0" stroke-width="0.28" textLength="25.02" lengthAdjust="spacingAndGlyphs">Timeline</text>
<text x="567.50" y="52.60" font-size="6.5" fill="#ececec" stroke="#ececec" stroke-width="0.28" textLength="15.46" lengthAdjust="spacingAndGlyphs">Color</text>
<text x="591.61" y="52.60" font-size="6.5" fill="#acacac" stroke="#acacac" stroke-width="0.28" textLength="26.93" lengthAdjust="spacingAndGlyphs">Swatches</text>
<text x="589.31" y="67.70" font-size="6.5" fill="#d4d4d4" stroke="#d4d4d4" stroke-width="0.28" textLength="4.57" lengthAdjust="spacingAndGlyphs">R</text>
<text x="589.52" y="82.30" font-size="6.5" fill="#d4d4d4" stroke="#d4d4d4" stroke-width="0.28" textLength="4.70" lengthAdjust="spacingAndGlyphs">G</text>
<text x="589.26" y="96.80" font-size="6.5" fill="#d4d4d4" stroke="#d4d4d4" stroke-width="0.28" textLength="4.71" lengthAdjust="spacingAndGlyphs">B</text>
<text x="656.80" y="68.20" font-size="6" fill="#d0d0d0" stroke="#d0d0d0" stroke-width="0.28" textLength="3.34" lengthAdjust="spacingAndGlyphs">0</text>
<text x="656.80" y="82.70" font-size="6" fill="#d0d0d0" stroke="#d0d0d0" stroke-width="0.28" textLength="3.34" lengthAdjust="spacingAndGlyphs">0</text>
<text x="656.80" y="97.20" font-size="6" fill="#d0d0d0" stroke="#d0d0d0" stroke-width="0.28" textLength="3.34" lengthAdjust="spacingAndGlyphs">0</text>
<text x="568.00" y="125.00" font-size="6.5" fill="#ececec" stroke="#ececec" stroke-width="0.28" textLength="35.35" lengthAdjust="spacingAndGlyphs">Adjustments</text>
<text x="611.51" y="125.00" font-size="6.5" fill="#acacac" stroke="#acacac" stroke-width="0.28" textLength="17.24" lengthAdjust="spacingAndGlyphs">Styles</text>
<text x="568.80" y="137.30" font-size="6.5" fill="#f4f4f4" font-weight="bold" textLength="57.36" lengthAdjust="spacingAndGlyphs">Add an adjustment</text>
<text x="567.43" y="200.30" font-size="6.5" fill="#ececec" stroke="#ececec" stroke-width="0.28" textLength="18.21" lengthAdjust="spacingAndGlyphs">Layers</text>
<text x="593.72" y="200.30" font-size="6.5" fill="#acacac" stroke="#acacac" stroke-width="0.28" textLength="25.42" lengthAdjust="spacingAndGlyphs">Channels</text>
<text x="628.23" y="200.30" font-size="6.5" fill="#acacac" stroke="#acacac" stroke-width="0.28" textLength="15.61" lengthAdjust="spacingAndGlyphs">Paths</text>
<text x="579.24" y="213.20" font-size="6.5" fill="#c8c8c8" stroke="#c8c8c8" stroke-width="0.28" textLength="11.94" lengthAdjust="spacingAndGlyphs">Kind</text>
<text x="570.73" y="230.20" font-size="6.5" fill="#c8c8c8" stroke="#c8c8c8" stroke-width="0.28" textLength="19.59" lengthAdjust="spacingAndGlyphs">Normal</text>
<text x="637.53" y="229.60" font-size="6.5" fill="#b8b8b8" font-weight="bold" textLength="22.36" lengthAdjust="spacingAndGlyphs">Opacity:</text>
<text x="666.68" y="229.90" font-size="6.5" fill="#7a7a7a" stroke="#7a7a7a" stroke-width="0.28" textLength="13.47" lengthAdjust="spacingAndGlyphs">100%</text>
<text x="567.44" y="248.00" font-size="6.5" fill="#c0c0c0" stroke="#c0c0c0" stroke-width="0.28" textLength="14.22" lengthAdjust="spacingAndGlyphs">Lock:</text>
<text x="650.37" y="246.60" font-size="6.5" fill="#b8b8b8" font-weight="bold" textLength="9.49" lengthAdjust="spacingAndGlyphs">Fill:</text>
<text x="666.68" y="247.00" font-size="6.5" fill="#7a7a7a" stroke="#7a7a7a" stroke-width="0.28" textLength="13.47" lengthAdjust="spacingAndGlyphs">100%</text>
<text x="609.61" y="268.90" font-size="6.5" fill="#ffffff" font-style="italic" stroke="#ffffff" stroke-width="0.28" textLength="32.51" lengthAdjust="spacingAndGlyphs">Background</text>
</svg>
</body></html>
